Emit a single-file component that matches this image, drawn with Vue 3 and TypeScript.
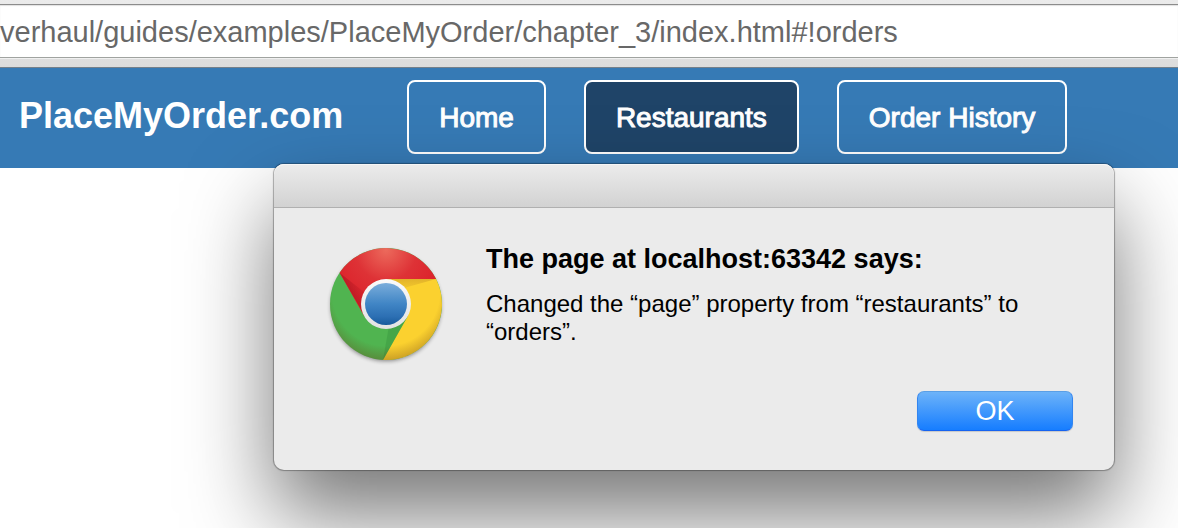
<script setup lang="ts">
import { ref } from 'vue'

interface NavItem {
  label: string
  page: string
}

const navItems: NavItem[] = [
  { label: 'Home', page: 'home' },
  { label: 'Restaurants', page: 'restaurants' },
  { label: 'Order History', page: 'orders' },
]

const currentPage = ref('restaurants')
const alertOpen = ref(true)
const address = ref('verhaul/guides/examples/PlaceMyOrder/chapter_3/index.html#!orders')
</script>

<template>
  <div class="window">
    <div class="toolbar">
      <input v-model="address" class="address" type="text" aria-label="Address" spellcheck="false" />
    </div>

    <header class="site-header">
      <a class="brand" href="#">PlaceMyOrder.com</a>
      <nav class="nav">
        <a
          v-for="item in navItems"
          :key="item.page"
          class="nav-link"
          :class="{ active: item.page === currentPage }"
          :href="'#!' + item.page"
          >{{ item.label }}</a
        >
      </nav>
    </header>

    <div v-if="alertOpen" class="dialog" role="alertdialog" aria-labelledby="alert-title" aria-describedby="alert-text">
      <div class="titlebar"></div>
      <div class="dialog-body">
        <svg class="browser-icon" viewBox="-60 -61 120 124" aria-hidden="true">
          <defs>
            <radialGradient id="red" gradientUnits="userSpaceOnUse" cx="0" cy="-54" r="56">
              <stop offset="0" stop-color="#ec6a5c" />
              <stop offset="0.55" stop-color="#de3236" />
              <stop offset="1" stop-color="#dc232b" />
            </radialGradient>
            <radialGradient id="rim" gradientUnits="userSpaceOnUse" cx="0" cy="-12" r="69">
              <stop offset="0.78" stop-color="#6a3a10" stop-opacity="0" />
              <stop offset="1" stop-color="#6a3a10" stop-opacity="0.34" />
            </radialGradient>
            <linearGradient id="ring" x1="0" y1="0" x2="0" y2="1">
              <stop offset="0" stop-color="#fafafa" />
              <stop offset="1" stop-color="#e2e2e2" />
            </linearGradient>
            <linearGradient id="blue" x1="0" y1="0" x2="0" y2="1">
              <stop offset="0" stop-color="#7aaddb" />
              <stop offset="0.5" stop-color="#4085c5" />
              <stop offset="0.8" stop-color="#2c6fb3" />
              <stop offset="1" stop-color="#175a9b" />
            </linearGradient>
            <linearGradient id="redFold" gradientUnits="userSpaceOnUse" x1="-35" y1="-12" x2="-23" y2="-18">
              <stop offset="0" stop-color="#b31822" stop-opacity="0.7" />
              <stop offset="1" stop-color="#c41d27" stop-opacity="0.2" />
            </linearGradient>
            <linearGradient id="yellowFold" gradientUnits="userSpaceOnUse" x1="0" y1="-25" x2="0" y2="-14">
              <stop offset="0" stop-color="#d6a427" stop-opacity="0.7" />
              <stop offset="1" stop-color="#e8bc2b" stop-opacity="0.4" />
            </linearGradient>
            <filter id="drop" x="-20%" y="-20%" width="140%" height="140%">
              <feGaussianBlur stdDeviation="2" />
            </filter>
          </defs>
          <circle cy="2" r="55" fill="#000" opacity="0.45" filter="url(#drop)" />
          <circle r="56" fill="#50b450" />
          <path d="M0 0 0 -25H50.1A56 56 0 0 1 -3 55.9L21.6 12.5Z" fill="#fbd12f" />
          <path d="M50.1 -25A56 56 0 0 0 -46.4 -31.3L-21.6 12.5 0 0V-25Z" fill="url(#red)" />
          <path d="M-46.4 -31.3-24 7-22-12Z" fill="url(#redFold)" />
          <path d="M50.1 -25 0 -25 18 -16Z" fill="url(#yellowFold)" />
          <path d="M-3 55.9 21.6 12.5 3 22Z" fill="#35913c" opacity="0.4" />
          <circle r="56" fill="url(#rim)" />
          <circle r="25" fill="url(#ring)" />
          <circle r="21" fill="url(#blue)" />
        </svg>
        <div class="message">
          <h1 id="alert-title">The page at localhost:63342 says:</h1>
          <p id="alert-text">Changed the “page” property from “restaurants” to “orders”.</p>
        </div>
      </div>
      <div class="actions">
        <button class="ok" type="button" @click="alertOpen = false">OK</button>
      </div>
    </div>
  </div>
</template>

<style>
body {
  margin: 0;
  background: #fff;
}
</style>

<style scoped>
.window {
  position: relative;
  min-height: 100vh;
  overflow: hidden;
  font-family: 'Liberation Sans', Arial, Helvetica, sans-serif;
}

.toolbar {
  padding: 4px 0 9px;
  background: linear-gradient(#ebebeb, #dcdcdc);
  border-bottom: 1px solid #75808a;
}

.address {
  display: block;
  box-sizing: border-box;
  width: 100%;
  height: 54px;
  margin: 0;
  padding: 2px 0 0;
  border: 0;
  border-top: 1px solid #8c8c8c;
  border-bottom: 1px solid #a0a3a0;
  border-radius: 0;
  outline: 0;
  background: #fff;
  box-shadow: inset 0 1px 1px #e2e2e2, 0 1px 0 #f0f0f0;
  color: #686868;
  font-family: inherit;
  font-size: 29px;
}

.site-header {
  display: flex;
  align-items: flex-start;
  gap: 64px;
  padding: 12px 19px 14px;
  background: #367ab5;
}

.brand {
  color: #fff;
  font-size: 36px;
  font-weight: 700;
  line-height: 72px;
  text-decoration: none;
}

.nav {
  display: flex;
  gap: 38px;
}

.nav-link {
  padding: 2px 30px 0;
  border: 2px solid #fff;
  border-radius: 8px;
  color: #fff;
  font-size: 28px;
  line-height: 68px;
  text-decoration: none;
  white-space: nowrap;
  -webkit-text-stroke: 1px #fff;
}

.nav-link.active {
  background: #1f4468;
}

.dialog {
  position: absolute;
  top: 164px;
  right: 64px;
  left: 274px;
  border-radius: 10px;
  background: #ebebeb;
  box-shadow:
    0 0 1px 1px rgba(0, 0, 0, 0.3),
    0 44px 86px rgba(0, 0, 0, 0.54);
}

.titlebar {
  height: 43px;
  border-bottom: 1px solid #b0b0b0;
  border-radius: 10px 10px 0 0;
  background: linear-gradient(#ececec, #d2d2d2);
  box-shadow: inset 0 1px 0 #f6f6f6;
}

.dialog-body {
  display: flex;
  align-items: flex-start;
  gap: 40px;
  padding: 35px 56px 0 52px;
}

.browser-icon {
  flex: none;
  width: 120px;
  height: 124px;
}

.message {
  color: #000;
}

.message h1 {
  margin: 0 0 15px;
  font-size: 27px;
  font-weight: 700;
  line-height: 32px;
}

.message p {
  margin: 0;
  font-size: 24px;
  line-height: 28px;
}

.actions {
  display: flex;
  justify-content: flex-end;
  padding: 24px 41px 39px;
}

.ok {
  width: 156px;
  height: 40px;
  padding: 0;
  border: 1px solid;
  border-color: #5a9fe6 #3385f0 #1663f0;
  border-radius: 7px;
  background: linear-gradient(#6db3f9, #167dff);
  box-shadow: 0 1px 1px rgba(0, 0, 0, 0.15);
  color: #fff;
  font-family: inherit;
  font-size: 27px;
  line-height: 38px;
}
</style>
